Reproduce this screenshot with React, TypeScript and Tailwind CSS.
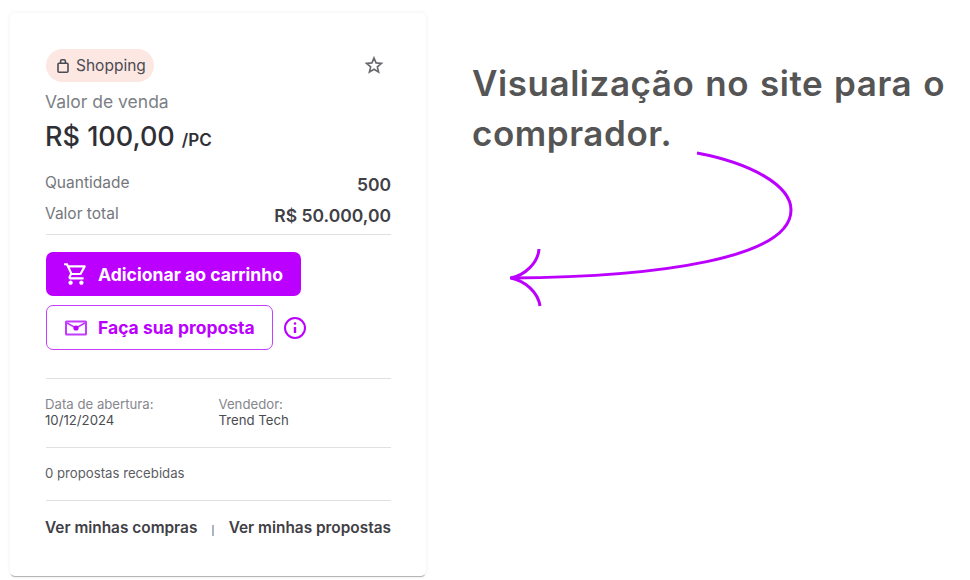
import React from "react";

function Bag() {
  return (
    <svg width="12" height="14" viewBox="0 0 12 14" fill="none" stroke="#4b4b52" strokeWidth="1.6" className="shrink-0">
      <rect x="1" y="4.2" width="10" height="9" rx="1" />
      <path d="M3.6 4.2V2.2C3.6 1.4 4.2.8 5 .8h2c.8 0 1.4.6 1.4 1.4v2" />
    </svg>
  );
}

function Star() {
  return (
    <svg width="20" height="20" viewBox="0 0 24 24" fill="none" stroke="#6a6a6e" strokeWidth="2" strokeLinejoin="miter">
      <path d="M12 3.6l2.5 5.9 6.4.5-4.9 4.2 1.5 6.2L12 17.1l-5.5 3.3L8 14.2 3.1 10l6.4-.5z" />
    </svg>
  );
}

function Cart() {
  return (
    <svg width="26" height="26" viewBox="0 0 24 24" fill="#ffffff" className="shrink-0">
      <path d="M15.55 13c.75 0 1.41-.41 1.75-1.03l3.58-6.49A.996.996 0 0020.01 4H5.21l-.94-2H1v2h2l3.6 7.59-1.35 2.44C4.52 15.37 5.48 17 7 17h12v-2H7l1.1-2h7.45zM6.16 6h12.15l-2.76 5H8.53L6.16 6zM7 18c-1.1 0-1.99.9-1.99 2S5.9 22 7 22s2-.9 2-2-.9-2-2-2zm10 0c-1.1 0-1.99.9-1.99 2s.89 2 1.99 2 2-.9 2-2-.9-2-2-2z" />
    </svg>
  );
}

function Mail() {
  return (
    <svg width="22" height="16" viewBox="0 0 22 16" fill="none" className="shrink-0">
      <rect x="1" y="1.5" width="20" height="13" rx="0.5" stroke="#c23cff" strokeWidth="2" />
      <path d="M2 3l9 5 9-5" stroke="#c23cff" strokeWidth="1.6" />
      <circle cx="11" cy="8" r="2.6" fill="#bb00ff" />
    </svg>
  );
}

function Info() {
  return (
    <svg width="24" height="24" viewBox="0 0 24 24" fill="none" stroke="#bb00ff" strokeWidth="2">
      <circle cx="12" cy="12" r="10" />
      <path d="M12 11v6" strokeWidth="2.4" />
      <circle cx="12" cy="7.5" r="1.3" fill="#bb00ff" stroke="none" />
    </svg>
  );
}

function Divider() {
  return <div className="ml-px h-px bg-[#e0e0e0]" />;
}

export default function App() {
  return (
    <div className="relative flex h-[580px] w-[970px] overflow-hidden bg-white font-['Inter',sans-serif]">
      <div className="ml-[10px] mt-[13px] flex h-[563px] w-[416px] shrink-0 flex-col rounded-[5px] bg-white px-[35px] pt-[36px] shadow-[0_2px_1px_-1px_rgba(0,0,0,0.3),0_0_4px_rgba(0,0,0,0.07)]">
        <div className="flex h-[33px] items-center justify-between">
          <div className="ml-px flex h-[33px] w-[108px] items-center gap-[7px] rounded-full bg-[#fde7e3] pl-[11px] text-[15.5px] text-[#4b4b52]">
            <Bag />
            <span>Shopping</span>
          </div>
          <div className="mb-[2px] mr-[7px]">
            <Star />
          </div>
        </div>
        <div className="mt-[10px] text-[17.5px] leading-[20px] text-[#7c7f86]">Valor de venda</div>
        <div className="mt-[7px] flex items-baseline gap-[7px] leading-[36px] text-[#2f3036]">
          <span className="text-[27px] font-medium">R$ 100,00</span>
          <span className="text-[17px] font-semibold">/PC</span>
        </div>
        <div className="mt-[14px] flex h-[24px] items-center justify-between">
          <span className="mb-[2px] text-[15.5px] text-[#74767c]">Quantidade</span>
          <span className="mt-[2px] text-[17.5px] font-semibold text-[#3f4046]">500</span>
        </div>
        <div className="mt-[7px] flex h-[24px] items-center justify-between">
          <span className="mb-[2px] text-[15.5px] text-[#74767c]">Valor total</span>
          <span className="mt-[2px] text-[17.5px] font-semibold text-[#3f4046]">R$ 50.000,00</span>
        </div>
        <div className="mt-[7px]">
          <Divider />
        </div>
        <div className="ml-px mt-[17px] flex h-[44px] w-[255px] items-center gap-[9px] rounded-[7px] bg-[#bb00ff] pl-[17px] text-[17.6px] font-bold text-white">
          <Cart />
          <span className="mt-[3px]">Adicionar ao carrinho</span>
        </div>
        <div className="ml-px mt-[9px] flex items-center gap-[10px]">
          <div className="flex h-[45px] w-[227px] items-center gap-[11px] rounded-[7px] border-[1.5px] border-[#c73dff] bg-white pl-[18px] text-[17.5px] font-bold text-[#bb00ff]">
            <Mail />
            <span className="mt-[2px]">Faça sua proposta</span>
          </div>
          <Info />
        </div>
        <div className="mt-[28px]">
          <Divider />
        </div>
        <div className="mt-[17px] flex text-[13.2px] leading-[16px]">
          <div className="w-[173.5px]">
            <div className="text-[#85878d]">Data de abertura:</div>
            <div className="text-[#4b4c52]">10/12/2024</div>
          </div>
          <div>
            <div className="text-[#85878d]">Vendedor:</div>
            <div className="text-[#4b4c52]">Trend Tech</div>
          </div>
        </div>
        <div className="mt-[19px]">
          <Divider />
        </div>
        <div className="mt-[17px] text-[13.2px] leading-[16px] text-[#5c5d63]">0 propostas recebidas</div>
        <div className="mt-[19px]">
          <Divider />
        </div>
        <div className="mt-[17px] flex items-center justify-between text-[15.4px] font-semibold leading-[20px] text-[#3f4046]">
          <span>Ver minhas compras</span>
          <span className="mt-[4px] h-[11px] w-[2px] bg-[#a9b4c4]" />
          <span>Ver minhas propostas</span>
        </div>
      </div>
      <div className="ml-[46px] mt-[58px] w-[473px]">
        <p className="text-justify text-[35px] font-semibold leading-[50px] tracking-[0.55px] text-[#555555]">
          Visualização no site para o comprador.
        </p>
      </div>
      <svg className="absolute left-0 top-0" width="970" height="580" viewBox="0 0 970 580" fill="none" stroke="#bb00ff" strokeWidth="3">
        <path d="M697 153C750 163 791 185 791 210C791 258 660 277 510 278" />
        <path d="M539 249C538 263 525 275 511 278C525 281 538 292 540 306" />
      </svg>
    </div>
  );
}
